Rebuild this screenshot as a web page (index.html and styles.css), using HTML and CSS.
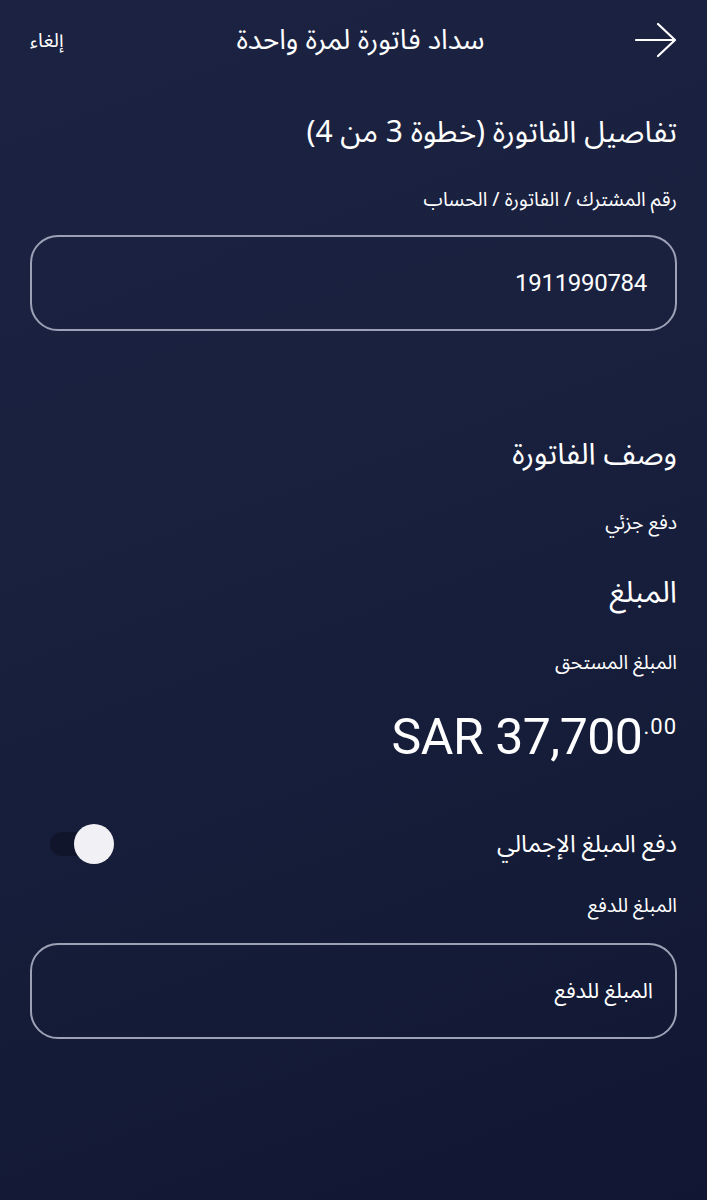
FILE: index.html
```html
<!DOCTYPE html>
<html lang="ar" dir="rtl">
<head>
<meta charset="utf-8">
<link rel="stylesheet" href="styles.css">
</head>
<body>
<div class="screen">
  <header class="topbar">
    <span class="back">
      <svg width="42" height="36" viewBox="0 0 42 36"><path d="M1 18 H40 M23 2 L40 18 L23 34" fill="none" stroke="#fff" stroke-width="2.2" stroke-linecap="round" stroke-linejoin="round"/></svg>
    </span>
    <h1 class="title">سداد فاتورة لمرة واحدة</h1>
    <span class="cancel">إلغاء</span>
  </header>

  <h2 class="heading step">تفاصيل الفاتورة (خطوة 3 من 4)</h2>
  <p class="label l1">رقم المشترك / الفاتورة / الحساب</p>
  <div class="field f1"><span class="num">1911990784</span></div>

  <h2 class="heading desc">وصف الفاتورة</h2>
  <p class="label l2">دفع جزئي</p>

  <h2 class="heading amt">المبلغ</h2>
  <p class="label l3">المبلغ المستحق</p>
  <div class="amount" dir="ltr">SAR 37,700<sup>.00</sup></div>

  <div class="toggle-row">
    <span class="toggle-text">دفع المبلغ الإجمالي</span>
    <span class="switch"><span class="track"></span><span class="knob"></span></span>
  </div>
  <p class="label l4">المبلغ للدفع</p>
  <div class="field f2"><span class="placeholder">المبلغ للدفع</span></div>
</div>
</body>
</html>
```
FILE: styles.css
```css
html, body {
  margin: 0;
  padding: 0;
}
body {
  width: 707px;
  height: 1200px;
  overflow: hidden;
  background: linear-gradient(160deg, #1c2342 0%, #1a213f 35%, #151c38 70%, #111732 100%);
  color: #ffffff;
  font-family: "Noto Sans Arabic", "DejaVu Sans", "Noto Sans", sans-serif;
}
.screen {
  padding: 0 30px;
  display: flex;
  flex-direction: column;
}
.topbar {
  height: 80px;
  display: flex;
  align-items: center;
  justify-content: space-between;
  direction: ltr;
  flex-direction: row-reverse;
}
.back {
  display: flex;
  width: 48px;
  justify-content: flex-end;
}
.title {
  margin: 0;
  font-size: 28px;
  font-weight: 400;
  direction: rtl;
  flex: 1;
  text-align: center;
  padding-left: 14px;
}
.cancel {
  font-size: 19.5px;
  width: 48px;
  direction: rtl;
  text-align: left;
}
.heading {
  margin: 0;
  font-weight: 400;
  font-size: 30px;
  line-height: 40px;
}
.step { margin-top: 33px; }
.label {
  margin: 0;
  font-size: 19.5px;
  line-height: 28px;
}
.l1 { margin-top: 33px; }
.field {
  height: 92px;
  border: 2px solid #9ca1b6;
  border-radius: 28px;
  display: flex;
  align-items: center;
  padding: 0 28px;
}
.f1 { margin-top: 21px; }
.num {
  font-family: "Roboto", "Liberation Sans", sans-serif;
  font-size: 24px;
  letter-spacing: -0.3px;
}
.desc { margin-top: 104px; }
.l2 { margin-top: 34px; }
.amt { margin-top: 36px; }
.l3 { margin-top: 36px; }
.amount {
  margin-top: 32px;
  text-align: right;
  font-family: "Roboto", "Liberation Sans", sans-serif;
  font-size: 50px;
  line-height: 56px;
  letter-spacing: -0.5px;
}
.amount sup {
  font-size: 22px;
  vertical-align: 0;
  position: relative;
  top: -20px;
  letter-spacing: 1px;
  margin-left: 1px;
}
.toggle-row {
  margin-top: 48px;
  display: flex;
  align-items: center;
  justify-content: space-between;
  height: 42px;
}
.toggle-text {
  font-size: 24px;
}
.switch {
  position: relative;
  width: 66px;
  height: 42px;
  margin-left: 18px;
}
.track {
  position: absolute;
  left: 2px;
  top: 9px;
  width: 56px;
  height: 24px;
  border-radius: 12px;
  background: #10152c;
}
.knob {
  position: absolute;
  left: 26px;
  top: 1px;
  width: 40px;
  height: 40px;
  border-radius: 50%;
  background: #f1f1f5;
}
.l4 { margin-top: 27px; }
.f2 { margin-top: 23px; }
.placeholder {
  font-size: 21.5px;
  margin-right: -6px;
}
```
